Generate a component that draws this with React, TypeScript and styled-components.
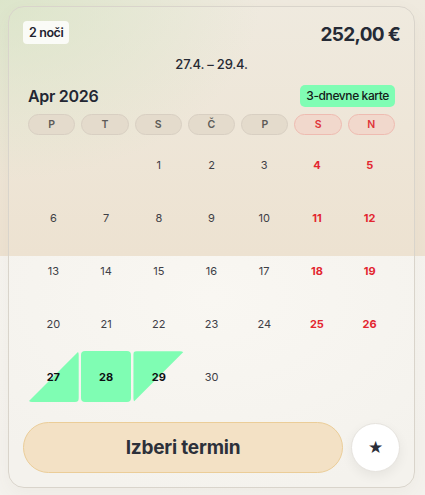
import React from "react";
import styled, { createGlobalStyle } from "styled-components";

const Global = createGlobalStyle`
  html, body { margin: 0; padding: 0; }
  body {
    font-family: Inter, "Noto Sans", "Liberation Sans", sans-serif;
    background-color: #f6f4ef;
  }
`;

const Page = styled.div`
  box-sizing: border-box;
  width: 425px;
  min-height: 495px;
  padding: 6px 10px 7px 8px;
  background-color: #f6f4ef;
  background-image:
    radial-gradient(ellipse 260px 180px at 0 0, rgba(214, 228, 196, 0.75), rgba(214, 228, 196, 0) 100%),
    linear-gradient(180deg, #efeadf 0%, #ede2d1 100%),
    radial-gradient(ellipse 300px 200px at 50% 60%, #f9f7f2, #f4f2ed 100%);
  background-size: 100% 256px, 100% 256px, 100% 100%;
  background-repeat: no-repeat;
`;

const Card = styled.div`
  box-sizing: border-box;
  width: 407px;
  height: 482px;
  border: 1px solid #d9d4cb;
  border-radius: 16px;
  padding: 14px 14px 14px 14px;
  display: flex;
  flex-direction: column;
  box-shadow: 0 6px 18px rgba(120, 100, 70, 0.05);
`;

const HeaderRow = styled.div`
  display: flex;
  justify-content: space-between;
  align-items: center;
  height: 23px;
`;

const NightsBadge = styled.span`
  background: rgba(255, 255, 255, 0.82);
  border-radius: 4px;
  padding: 0 6px;
  height: 23px;
  line-height: 23px;
  font-size: 12.5px;
  font-weight: 600;
  letter-spacing: -0.4px;
  color: #1f2330;
`;

const Price = styled.span`
  font-size: 19px;
  font-weight: 700;
  color: #252a35;
  letter-spacing: -0.7px;
  margin-top: 3px;
`;

const DateRange = styled.div`
  margin-top: 12px;
  text-align: center;
  font-size: 13px;
  font-weight: 500;
  line-height: 16px;
  letter-spacing: -0.2px;
  color: #262a33;
`;

const Calendar = styled.div`
  padding: 0 5px;
  display: flex;
  flex-direction: column;
`;

const MonthRow = styled.div`
  margin-top: 13px;
  display: flex;
  justify-content: space-between;
  align-items: center;
  height: 22px;
`;

const MonthTitle = styled.span`
  font-size: 16px;
  font-weight: 600;
  letter-spacing: -0.3px;
  color: #232733;
`;

const TicketBadge = styled.span`
  background: #80fdb4;
  border-radius: 5px;
  padding: 0 6px;
  height: 22px;
  line-height: 22px;
  font-size: 12px;
  font-weight: 500;
  letter-spacing: -0.4px;
  color: #15201a;
`;

const Weekdays = styled.div`
  margin-top: 7px;
  display: grid;
  grid-template-columns: repeat(7, 1fr);
  gap: 6px;
`;

const Pill = styled.div<{ $weekend?: boolean }>`
  box-sizing: border-box;
  height: 21px;
  border-radius: 11px;
  display: flex;
  align-items: center;
  justify-content: center;
  font-size: 10.5px;
  font-weight: 600;
  color: ${(p) => (p.$weekend ? "#e0343a" : "#5d5b58")};
  background: ${(p) => (p.$weekend ? "#f1d8cc" : "#e4dbcc")};
  border: 1px solid ${(p) => (p.$weekend ? "#eebbb1" : "#d8cfc2")};
`;

const Days = styled.div`
  margin-top: 5px;
  display: grid;
  grid-template-columns: repeat(7, 1fr);
  grid-auto-rows: 50.8px;
  gap: 2px;
`;

type Sel = "start" | "mid" | "end" | undefined;

const clipFor = (s: Sel) =>
  s === "start"
    ? "polygon(100% 0, 100% 100%, 0 100%)"
    : s === "end"
    ? "polygon(0 0, 100% 0, 0 100%)"
    : "none";

const Day = styled.div<{ $weekend?: boolean; $sel?: Sel }>`
  position: relative;
  display: flex;
  align-items: center;
  justify-content: center;
  font-size: 11px;
  font-weight: ${(p) => (p.$sel ? 700 : p.$weekend ? 700 : 400)};
  color: ${(p) => (p.$sel ? "#0d0f12" : p.$weekend ? "#e3262f" : "#3e4046")};
  &::before {
    content: "";
    position: absolute;
    inset: 0;
    border-radius: 4px;
    background: ${(p) => (p.$sel ? "#7ffdb3" : "transparent")};
    clip-path: ${(p) => clipFor(p.$sel)};
  }
`;

const DayNum = styled.span`
  position: relative;
`;

const Actions = styled.div`
  margin-top: 20px;
  display: flex;
  align-items: center;
  gap: 8px;
`;

const MainButton = styled.button`
  box-sizing: border-box;
  flex: 1;
  height: 51px;
  border-radius: 26px;
  border: 1px solid #ebcd98;
  background: #f3e1c5;
  font-family: inherit;
  font-size: 19px;
  font-weight: 700;
  letter-spacing: -0.2px;
  color: #2c303a;
  cursor: pointer;
`;

const StarButton = styled.button`
  box-sizing: border-box;
  width: 49px;
  height: 49px;
  border-radius: 50%;
  border: 1px solid #e6e3de;
  background: #ffffff;
  box-shadow: 0 4px 12px rgba(0, 0, 0, 0.06);
  display: flex;
  align-items: center;
  justify-content: center;
  font-size: 17px;
  color: #2a2e38;
  padding: 0;
  cursor: pointer;
`;

const weekdays = ["P", "T", "S", "Č", "P", "S", "N"];

export default function App() {
  const cells: (number | null)[] = [null, null];
  for (let d = 1; d <= 30; d++) cells.push(d);
  const selOf = (d: number): Sel =>
    d === 27 ? "start" : d === 28 ? "mid" : d === 29 ? "end" : undefined;

  return (
    <>
      <Global />
      <Page>
        <Card>
          <HeaderRow>
            <NightsBadge>2 noči</NightsBadge>
            <Price>252,00 €</Price>
          </HeaderRow>
          <DateRange>27.4. – 29.4.</DateRange>
          <Calendar>
            <MonthRow>
              <MonthTitle>Apr 2026</MonthTitle>
              <TicketBadge>3-dnevne karte</TicketBadge>
            </MonthRow>
            <Weekdays>
              {weekdays.map((w, i) => (
                <Pill key={i} $weekend={i >= 5}>
                  {w}
                </Pill>
              ))}
            </Weekdays>
            <Days>
              {cells.map((d, i) =>
                d === null ? (
                  <Day key={i} />
                ) : (
                  <Day key={i} $weekend={i % 7 >= 5} $sel={selOf(d)}>
                    <DayNum>{d}</DayNum>
                  </Day>
                )
              )}
            </Days>
          </Calendar>
          <Actions>
            <MainButton>Izberi termin</MainButton>
            <StarButton>★</StarButton>
          </Actions>
        </Card>
      </Page>
    </>
  );
}
